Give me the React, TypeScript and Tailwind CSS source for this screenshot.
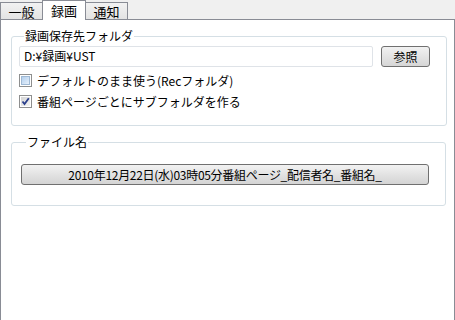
import React from "react";

const TABS = ["一般", "録画", "通知"];
const ACTIVE = 1;

function CheckBox({ checked }: { checked?: boolean }) {
  return (
    <span className="flex h-[13px] w-[13px] items-center justify-center border border-[#8e8f8f] bg-white">
      <span
        className={
          "flex h-[9px] w-[9px] items-center justify-center " +
          (checked
            ? "bg-gradient-to-br from-[#d4d4d4] to-[#f4f4f4]"
            : "border border-[#9fb9d4] bg-gradient-to-br from-[#b4d0ee] to-[#e6f0fb]")
        }
      >
        {checked && (
          <svg width="9" height="9" viewBox="0 0 9 9">
            <path d="M1.5 4.5 L3.5 7 L7.8 1.2" fill="none" stroke="#2a3f8c" strokeWidth="1.8" />
          </svg>
        )}
      </span>
    </span>
  );
}

function Group({ title, children, className }: { title: string; children: React.ReactNode; className?: string }) {
  return (
    <fieldset className={"rounded-[3px] border border-[#d5dfe5] px-[7px] " + (className ?? "")}>
      <legend className="ml-[5px] px-px leading-[16px]">{title}</legend>
      {children}
    </fieldset>
  );
}

export default function App() {
  return (
    <div
      className="flex h-[320px] w-[455px] flex-col bg-[#f0f0f0] text-[12px] text-black"
      style={{ fontFamily: '"Noto Sans CJK JP", "Noto Sans", sans-serif' }}
    >
      {/* タブ */}
      <div className="flex h-[19px] items-end">
        {TABS.map((t, i) =>
          i === ACTIVE ? (
            <div
              key={t}
              className="relative z-10 -mb-px flex h-[20px] w-[44px] items-center justify-center border-x border-t border-[#898c95] bg-white text-[13px] leading-none"
            >
              {t}
            </div>
          ) : (
            <div
              key={t}
              className={
                "flex h-[17px] w-[42px] items-center justify-center border-t border-[#898c95] bg-gradient-to-b from-[#f2f2f2] to-[#e3e3e3] text-[13px] leading-none " +
                (i === 0 ? "border-l" : "border-r")
              }
            >
              {t}
            </div>
          )
        )}
      </div>

      {/* パネル */}
      <div className="flex flex-1 flex-col gap-[8px] border-x border-t border-[#898c95] bg-white pl-[10px] pr-[7px] pt-[8px]">
        <Group title="録画保存先フォルダ" className="pb-[16px]">
          <div className="mt-[1px] flex items-center">
            <div className="flex h-[21px] w-[354px] items-center rounded-[2px] border border-[#dfe3e8] px-[4px] leading-none">
              D:¥録画¥UST
            </div>
            <button className="ml-[8px] mt-[1px] h-[21px] w-[49px] rounded-[3px] border border-[#707070] bg-gradient-to-b from-[#f2f2f2] to-[#d6d6d6] leading-none">
              参照
            </button>
          </div>
          <label className="mt-[6px] flex h-[15px] items-center gap-[5px]">
            <CheckBox />
            <span className="leading-none">デフォルトのまま使う(Recフォルダ)</span>
          </label>
          <label className="mt-[6px] flex h-[15px] items-center gap-[5px]">
            <CheckBox checked />
            <span className="leading-none">番組ページごとにサブフォルダを作る</span>
          </label>
        </Group>

        <Group title="ファイル名" className="mr-[1px] pb-[20px] pl-[9px]">
          <button className="mt-[14px] flex h-[21px] w-[408px] items-center justify-center rounded-[3px] border border-[#707070] bg-gradient-to-b from-[#f2f2f2] to-[#d4d4d4] leading-none tracking-[-0.3px]">
            2010年12月22日(水)03時05分番組ページ_配信者名_番組名_
          </button>
        </Group>
      </div>
    </div>
  );
}
